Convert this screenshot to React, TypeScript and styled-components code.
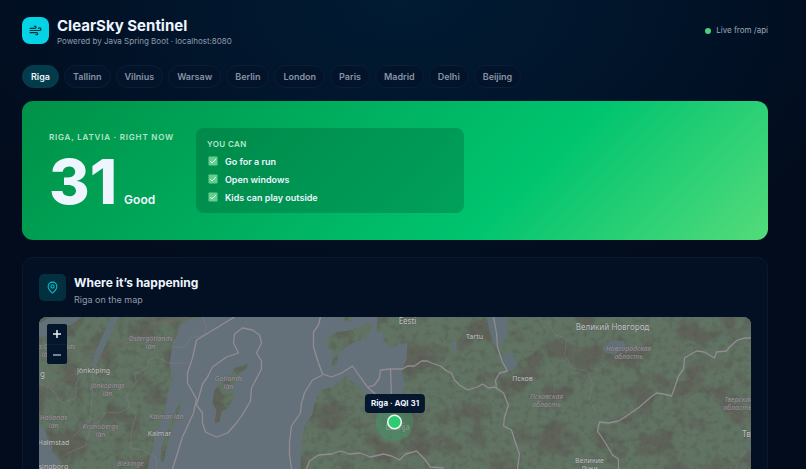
import React, { useState } from "react";
import styled, { createGlobalStyle } from "styled-components";
import { MapPin, Wind } from "lucide-react";

const GlobalStyle = createGlobalStyle`
  * { box-sizing: border-box; }
  html { background: #020b1b; scrollbar-width: none; }
  body {
    margin: 0;
    color: #eef5ff;
    font-family: Inter, "Liberation Sans", sans-serif;
    background: radial-gradient(ellipse 480px 290px at 50% 0, #011c33 0%, #01142a 50%, #020c1d 100%) no-repeat #020c1d;
  }
  button { font: inherit; cursor: pointer; }
  h1, h2, p, ul { margin: 0; padding: 0; }
`;

const Page = styled.div`
  padding: 17px 38px 24px 22px;
`;

const Header = styled.header`
  display: flex;
  justify-content: space-between;
  align-items: flex-start;
`;

const Brand = styled.div`
  display: flex;
  align-items: flex-start;
  gap: 8px;
`;

const IconTile = styled.span<{ $bright?: boolean }>`
  display: flex;
  align-items: center;
  justify-content: center;
  width: 27px;
  height: 27px;
  border-radius: ${(p) => (p.$bright ? 8 : 5)}px;
  color: ${(p) => (p.$bright ? "#04303f" : "#08bfd0")};
  background: ${(p) => (p.$bright ? "#05d3e5" : "#03303f")};
`;

const Title = styled.h1`
  font-size: 15px;
  line-height: 18px;
  font-weight: 700;
`;

const Tagline = styled.p`
  font-size: 8px;
  line-height: 13px;
  color: #919dad;
`;

const Live = styled.div`
  display: flex;
  align-items: center;
  gap: 5px;
  font-size: 8px;
  line-height: 27px;
  color: #9ba7b6;
`;

const LiveDot = styled.span`
  width: 6px;
  height: 6px;
  border-radius: 50%;
  background: #4bcf7c;
`;

const Cities = styled.nav`
  display: flex;
  flex-wrap: wrap;
  gap: 5px;
  margin-top: 17px;
`;

const CityButton = styled.button<{ $active: boolean }>`
  height: 23px;
  padding: 0 8px;
  border: 1px solid ${(p) => (p.$active ? "#043e4e" : "#0a1e34")};
  border-radius: 12px;
  background: ${(p) => (p.$active ? "#043b4b" : "#02132a")};
  color: ${(p) => (p.$active ? "#e9f5fb" : "#8793a5")};
  && { font-size: 9px; font-weight: 600; }
`;

const Hero = styled.section`
  display: flex;
  align-items: center;
  gap: 22px;
  margin-top: 13px;
  padding: 27px;
  border-radius: 11px;
  background: linear-gradient(135deg, #009148 0%, #00c46f 66%, #54db7b 100%);
`;

const Label = styled.p`
  font-size: 8px;
  line-height: 12px;
  font-weight: 600;
  letter-spacing: 0.1em;
  text-transform: uppercase;
  color: #b5e5cb;
`;

const Score = styled.div`
  display: flex;
  align-items: baseline;
  gap: 7px;
  margin-top: 10px;
`;

const ScoreValue = styled.strong`
  font-size: 62px;
  line-height: 58px;
  font-weight: 800;
`;

const ScoreWord = styled.span`
  font-size: 12px;
  font-weight: 600;
`;

const Advice = styled.div`
  flex: 0 1 268px;
  padding: 10px 11px 7px;
  border-radius: 8px;
  background: rgba(0, 65, 40, 0.25);
`;

const AdviceLabel = styled(Label)`
  margin-bottom: 2px;
  letter-spacing: 0.05em;
`;

const AdviceItem = styled.li`
  display: flex;
  align-items: center;
  gap: 7px;
  height: 18px;
  padding-left: 1px;
  font-size: 9px;
  font-weight: 600;
  list-style: none;
`;

const Card = styled.section`
  margin-top: 17px;
  padding: 16px;
  border: 1px solid #0a1a2e;
  border-radius: 11px;
  background: #031023;
`;

const CardTitle = styled.h2`
  font-size: 12px;
  line-height: 18px;
  font-weight: 700;
`;

const CardSub = styled.p`
  font-size: 9px;
  line-height: 15px;
  color: #8f9aab;
`;

const MapFrame = styled.div`
  position: relative;
  display: flex;
  justify-content: center;
  height: 212px;
  margin-top: 10px;
  overflow: hidden;
  border-radius: 8px;
  background: #65717a;
  svg { flex: 1 0 100%; height: 100%; }
`;

const ZoomControls = styled.div`
  position: absolute;
  top: 7px;
  left: 8px;
  display: flex;
  flex-direction: column;
  border-radius: 2px;
  overflow: hidden;
`;

const ZoomButton = styled.button`
  display: flex;
  align-items: center;
  justify-content: center;
  width: 20px;
  height: 20px;
  padding: 0;
  border: 0;
  background: #03162b;
  color: #edf2f8;
  & + & { border-top: 1px solid #0a2036; }
  && svg { flex: none; width: 10px; height: 10px; }
`;

const MapTip = styled.div`
  position: absolute;
  left: 50%;
  top: 77px;
  transform: translateX(-50%);
  padding: 0 6px;
  border-radius: 4px;
  background: #05162d;
  font-size: 8px;
  line-height: 19px;
  font-weight: 700;
  white-space: nowrap;
`;

const Check = () => (
  <svg width="10" height="10" viewBox="0 0 10 10" aria-hidden="true">
    <rect x="0.5" y="0.5" width="9" height="9" rx="0.8" fill="#62cf8e" />
    <path d="M2.3 5.1 4.1 7 7.9 3" fill="none" stroke="#effff5" strokeWidth="1" />
  </svg>
);

const LAND = [
  "M39 317H202L190 320 181 325 178 335 173 344 170 363 173 380 168 395 166 410 160 425 154 435 155 445 150 458 148 470 140 529H63L60 469 62 462 52 452 53 446 48 438 46 431 39 425Z",
  "M181 400 182 406 177 420 171 431 168 446 164 462 161 460 162 448 166 434 173 418Z",
  "M250 363 246 369 239 374 235 385 228 389 237 396 233 400 229 408 222 411 220 422 215 423 217 410 213 403 215 390 222 382 230 376 236 368 244 365Z",
  "M328 338 337 332 347 331 357 328 368 323 374 326 370 332 367 338 353 343 345 348 339 353 337 365 332 366 334 353 328 347Z",
  "M343 317H354L351 322 346 321Z",
  "M378 317 377 331 384 334 383 341 392 349 399 344 408 343 407 360 402 370 405 384 402 394 395 403 387 409 379 409 375 401 368 397 358 384 350 380 346 376 334 386 320 391 315 403 313 414 305 426 302 440 301 469 295 529H752V317Z",
];

const LAKES = [
  "M112 317H119L113 330 106 345 97 365 92 368 94 357 101 340Z",
  "M39 324 49 318 83 317 71 325 59 327 47 336 39 337Z",
  "M487 317H509L507 336 502 346 494 343 490 331Z",
  "M503 354 513 353 518 363 512 372 506 368Z",
  "M603 347 612 340 624 341 627 347 615 355 605 352Z",
  "M452 343 457 339 457 351 454 353Z",
];

const BORDERS = [
  "M235 317 197 340 193 358 188 373 188 383 197 399 194 413 183 437 173 469 166 500",
  "M197 405 200 395 203 384 208 377 213 367 227 357 239 353 234 343 235 334 243 328 253 330 260 335 262 343 257 353 262 361 262 369 252 388 251 401 244 413 237 423 228 433 217 437 206 432 203 423 203 413Z",
  "M321 317 319 325 314 332 314 347 319 363 323 374 332 377 342 373 353 366 360 376 368 387 378 396 382 409",
  "M323 375 313 380 305 393 302 403 301 413 292 426 290 442 290 455 292 469",
  "M368 387 375 385 380 378 381 370 391 369 403 369 408 366 415 366 422 361 428 361 432 363 441 366 447 371 452 373 455 380 460 385 468 390 478 387 483 384 489 388 495 387 504 393 509 405 505 417 504 426 512 430 516 443 520 454 518 469",
  "M391 369 392 398",
  "M497 389 496 380 500 373 508 371 503 362 498 347 497 333 494 317",
  "M307 469 310 461 319 455 332 454 341 451 350 454 361 453 371 457 384 454 392 456 400 460 406 454 417 451 425 459 431 467 444 468",
  "M752 338 745 338 738 340 730 347 727 351 717 352 715 358 705 352 697 351 690 355 685 358 684 369 679 376 675 388 672 396 664 394 657 393 649 399 640 407 627 416 619 421 609 423 600 422 598 431 606 443 613 455 619 459 619 469",
];

const MINOR = [
  "M172 346 185 348 191 338 205 335 207 326 203 317M170 363H189M39 383 52 389 62 403 76 398 77 382 89 365",
  "M170 363 157 357 149 360 148 368 135 374 137 382 127 395 130 407 120 413 106 412 100 421 91 427 86 446 68 453",
  "M130 407 137 414 132 431 131 448 142 450 157 458V480",
  "M548 321 555 334 567 339 565 355 573 368 588 371 593 384 590 399 598 416",
  "M89 365 94 378 92 400 91 419 74 436M747 450 740 459 736 469",
];

type Place = [string, number, number, boolean?, number?];

const PLACES: Place[] = [
  ["Eesti", 408, 324, false, 8],
  ["Tartu", 475, 339],
  ["Великий Новгород", 613, 330, false, 8],
  ["Псков", 523, 381],
  ["Великие", 590, 463],
  ["Луки", 590, 471],
  ["Тв", 747, 437, false, 8],
  ["Jönköping", 94, 373],
  ["Kalmar", 160, 436],
  ["Halmstad", 54, 445],
  ["singborg", 54, 469],
  ["g", 43, 377, false, 8],
  ["Östergötlands", 151, 341, true],
  ["län", 151, 349, true],
  ["Jönköpings", 108, 388, true],
  ["län", 108, 396, true],
  ["Hallands", 54, 420, true],
  ["län", 54, 428, true],
  ["Kronobergs", 101, 429, true],
  ["län", 101, 437, true],
  ["Kalmar län", 167, 419, true],
  ["Gotlands", 229, 381, true],
  ["län", 229, 389, true],
  ["Blekinge", 131, 466, true],
  ["a Götalands", 57, 349, true],
  ["län", 47, 357, true],
  ["Новгородская", 629, 351, true],
  ["область", 629, 359, true],
  ["Псковская", 547, 399, true],
  ["область", 547, 407, true],
  ["Тверская", 739, 402, true],
  ["область", 738, 410, true],
];

const RegionMap = () => (
  <svg viewBox="39 317 713 212" preserveAspectRatio="xMidYMid slice" role="img" aria-label="Map around Riga">
    <defs>
      <filter id="patches" x="0" y="0" width="100%" height="100%" colorInterpolationFilters="sRGB">
        <feTurbulence type="fractalNoise" baseFrequency="0.035" numOctaves="5" seed="8" />
        <feColorMatrix values="0 0 0 0 0.36  0 0 0 0 0.34  0 0 0 0 0.32  5 0 0 0 -2.5" />
      </filter>
      <filter id="grain" x="0" y="0" width="100%" height="100%" colorInterpolationFilters="sRGB">
        <feTurbulence type="fractalNoise" baseFrequency="0.16" numOctaves="3" seed="3" />
        <feColorMatrix values="0 0 0 0 0.32  0 0 0 0 0.34  0 0 0 0 0.31  0 4 0 0 -2" />
      </filter>
      <clipPath id="land">
        {LAND.map((d) => <path key={d} d={d} />)}
      </clipPath>
    </defs>
    <rect x="39" y="317" width="713" height="212" fill="#65717a" />
    <g clipPath="url(#land)">
      <rect x="39" y="317" width="713" height="212" fill="#617363" />
      <rect x="39" y="317" width="713" height="212" filter="url(#patches)" opacity="0.6" />
      <rect x="39" y="317" width="713" height="212" filter="url(#grain)" opacity="0.35" />
    </g>
    {LAKES.map((d) => <path key={d} d={d} fill="#627078" />)}
    <g fill="none" strokeLinejoin="round">
      {MINOR.map((d) => <path key={d} d={d} stroke="#82817f" strokeOpacity="0.6" strokeWidth="0.8" />)}
      <path d="M39 389 64 381 89 364 114 346 139 338 157 322 184 319M670 340 693 366 707 387 727 410 752 425" stroke="#80625f" strokeOpacity="0.7" strokeWidth="0.9" />
      {BORDERS.map((d) => <path key={d} d={d} stroke="#928b91" strokeWidth="1.3" />)}
    </g>
    <g fontFamily='"Noto Sans", sans-serif' textAnchor="middle" stroke="#555b59" strokeWidth="1" strokeOpacity="0.6" paintOrder="stroke">
      {PLACES.map(([name, x, y, region, size]) => (
        <text key={`${name}-${x}-${y}`} x={x} y={y} fontSize={size ?? 7} fontStyle={region ? "italic" : "normal"} fill={region ? "#a0949f" : "#c0c2c0"}>
          {name}
        </text>
      ))}
    </g>
    <circle cx="395" cy="422" r="19" fill="#3aa76a" fillOpacity="0.35" />
    <text x="398" y="430" fontFamily='"Noto Sans", sans-serif' fontSize="8" textAnchor="middle" fill="#8b9c91">Latvija</text>
    <circle cx="395" cy="422" r="6.8" fill="#2ecc71" stroke="#f1faf5" strokeWidth="1.5" />
  </svg>
);

const CITIES = ["Riga", "Tallinn", "Vilnius", "Warsaw", "Berlin", "London", "Paris", "Madrid", "Delhi", "Beijing"];
const ADVICE = ["Go for a run", "Open windows", "Kids can play outside"];

export default function App() {
  const [city, setCity] = useState("Riga");
  return (
    <>
      <GlobalStyle />
      <Page>
        <Header>
          <Brand>
            <IconTile $bright><Wind size={13} strokeWidth={2.2} /></IconTile>
            <div>
              <Title>ClearSky Sentinel</Title>
              <Tagline>Powered by Java Spring Boot · localhost:8080</Tagline>
            </div>
          </Brand>
          <Live><LiveDot />Live from /api</Live>
        </Header>
        <Cities aria-label="Cities">
          {CITIES.map((name) => (
            <CityButton key={name} type="button" $active={name === city} aria-pressed={name === city} onClick={() => setCity(name)}>
              {name}
            </CityButton>
          ))}
        </Cities>
        <main>
          <Hero>
            <div>
              <Label>Riga, Latvia · Right now</Label>
              <Score>
                <ScoreValue>31</ScoreValue>
                <ScoreWord>Good</ScoreWord>
              </Score>
            </div>
            <Advice>
              <AdviceLabel>You can</AdviceLabel>
              <ul>
                {ADVICE.map((text) => <AdviceItem key={text}><Check />{text}</AdviceItem>)}
              </ul>
            </Advice>
          </Hero>
          <Card>
            <Brand>
              <IconTile><MapPin size={13} /></IconTile>
              <div>
                <CardTitle>Where it’s happening</CardTitle>
                <CardSub>Riga on the map</CardSub>
              </div>
            </Brand>
            <MapFrame>
              <RegionMap />
              <ZoomControls>
                <ZoomButton type="button" aria-label="Zoom in">
                  <svg viewBox="0 0 10 10"><path d="M5 1V9M1 5H9" stroke="currentColor" strokeWidth="1.5" /></svg>
                </ZoomButton>
                <ZoomButton type="button" aria-label="Zoom out">
                  <svg viewBox="0 0 10 10"><path d="M1 5H9" stroke="currentColor" strokeWidth="1.2" /></svg>
                </ZoomButton>
              </ZoomControls>
              <MapTip>Riga · AQI 31</MapTip>
            </MapFrame>
          </Card>
        </main>
      </Page>
    </>
  );
}
